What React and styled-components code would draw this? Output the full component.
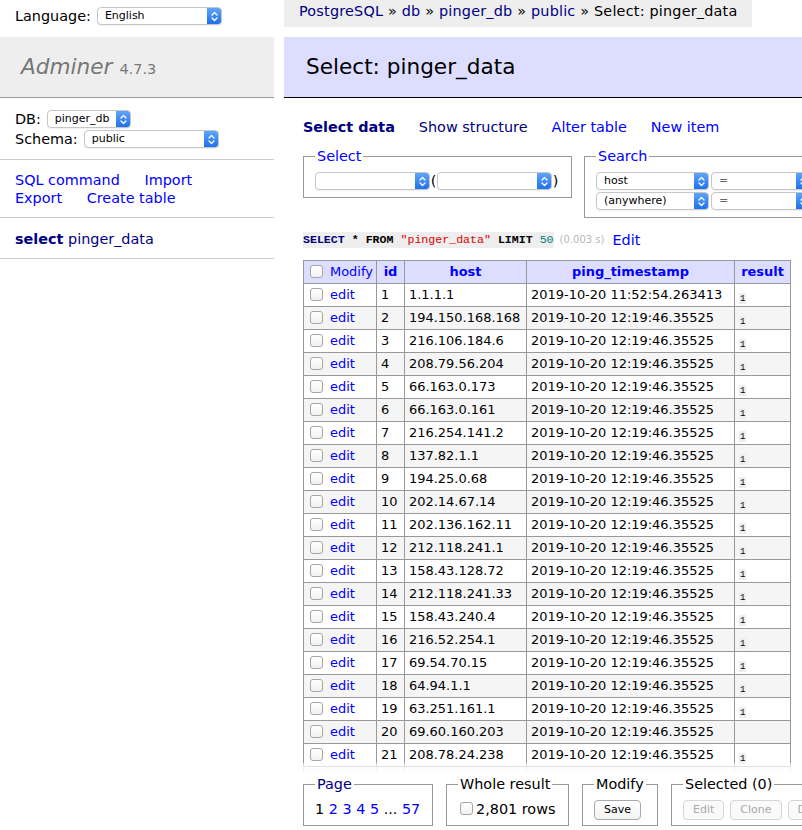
import React from "react";
import styled, { createGlobalStyle } from "styled-components";

const rows = [
  [1, "1.1.1.1", "2019-10-20 11:52:54.263413", "1"],
  [2, "194.150.168.168", "2019-10-20 12:19:46.35525", "1"],
  [3, "216.106.184.6", "2019-10-20 12:19:46.35525", "1"],
  [4, "208.79.56.204", "2019-10-20 12:19:46.35525", "1"],
  [5, "66.163.0.173", "2019-10-20 12:19:46.35525", "1"],
  [6, "66.163.0.161", "2019-10-20 12:19:46.35525", "1"],
  [7, "216.254.141.2", "2019-10-20 12:19:46.35525", "1"],
  [8, "137.82.1.1", "2019-10-20 12:19:46.35525", "1"],
  [9, "194.25.0.68", "2019-10-20 12:19:46.35525", "1"],
  [10, "202.14.67.14", "2019-10-20 12:19:46.35525", "1"],
  [11, "202.136.162.11", "2019-10-20 12:19:46.35525", "1"],
  [12, "212.118.241.1", "2019-10-20 12:19:46.35525", "1"],
  [13, "158.43.128.72", "2019-10-20 12:19:46.35525", "1"],
  [14, "212.118.241.33", "2019-10-20 12:19:46.35525", "1"],
  [15, "158.43.240.4", "2019-10-20 12:19:46.35525", "1"],
  [16, "216.52.254.1", "2019-10-20 12:19:46.35525", "1"],
  [17, "69.54.70.15", "2019-10-20 12:19:46.35525", "1"],
  [18, "64.94.1.1", "2019-10-20 12:19:46.35525", "1"],
  [19, "63.251.161.1", "2019-10-20 12:19:46.35525", "1"],
  [20, "69.60.160.203", "2019-10-20 12:19:46.35525", ""],
  [21, "208.78.24.238", "2019-10-20 12:19:46.35525", "1"],
  [22, "8.8.8.8", "2019-10-20 12:19:46.35525", "1"],
  [23, "8.8.4.4", "2019-10-20 12:19:46.35525", "1"],
];

const GlobalStyle = createGlobalStyle`
  html, body { margin: 0; padding: 0; background: #fff; }
  body {
    font: 14.4px/1.25 "DejaVu Sans", Verdana, sans-serif;
    color: #000;
    overflow: hidden;
  }
`;

const Page = styled.div`
  display: flex;
  width: 802px;
  height: 830px;
  overflow: hidden;
`;

const Side = styled.div`
  width: 274px;
  flex: none;
`;

const Main = styled.div`
  flex: none;
  width: 640px;
  margin-left: 10px;
  height: 830px;
  display: flex;
  flex-direction: column;
`;

const Link = styled.a`
  color: ${(p) => (p.$visited ? "#000080" : "#0000ff")};
  text-decoration: none;
  font-weight: ${(p) => (p.$bold ? "bold" : "normal")};
  cursor: pointer;
  white-space: nowrap;
`;

const LangBar = styled.div`
  display: flex;
  align-items: center;
  gap: 6px;
  height: 32px;
  padding: 0 15px;
  margin-bottom: 5px;
`;

const Logo = styled.h1`
  margin: 0;
  height: 60px;
  display: flex;
  align-items: center;
  padding: 0 21px;
  background: #eee;
  border-bottom: 1px solid #999;
  font-size: 21.6px;
  font-weight: normal;
  font-style: italic;
  color: #777;
`;

const Version = styled.span`
  font-style: normal;
  font-size: 14.5px;
  margin-left: 7px;
  margin-top: 4px;
`;

const MenuBlock = styled.div`
  padding: ${(p) => p.$pad || "11px 15px"};
  border-bottom: 1px solid #ccc;
  line-height: ${(p) => p.$lh || "18px"};
`;

const FieldRow = styled.div`
  display: flex;
  align-items: center;
  gap: 6px;
  height: 20px;
`;

const MenuLink = styled(Link)`
  margin-right: 20px;
`;

const SelectBox = styled.span`
  display: inline-flex;
  align-items: stretch;
  width: ${(p) => p.$w}px;
  height: 18px;
  box-sizing: border-box;
  border: 1px solid #c6c6c6;
  border-radius: 4px;
  background: #fff;
  font: 11px/16px "DejaVu Sans", sans-serif;
  color: ${(p) => (p.$muted ? "#666" : "#000")};
  overflow: hidden;
  vertical-align: middle;
  box-shadow: 0 1px 1px rgba(0, 0, 0, 0.06);
  flex: none;
`;

const SelectText = styled.span`
  flex: 1;
  padding-left: 7px;
  white-space: nowrap;
  overflow: hidden;
`;

const Stepper = styled.span`
  width: 15px;
  margin: -1px -1px -1px 0;
  border-radius: 0 4px 4px 0;
  background: linear-gradient(#63a8fb, #1b6ee9);
  display: flex;
  align-items: center;
  justify-content: center;
`;

function Select({ w, text, muted }) {
  return (
    <SelectBox $w={w} $muted={muted}>
      <SelectText>{text}</SelectText>
      <Stepper>
        <svg width="7" height="11" viewBox="0 0 7 11" fill="none" stroke="#fff" strokeWidth="1.3" strokeLinecap="round" strokeLinejoin="round">
          <path d="M1 4 L3.5 1.5 L6 4" />
          <path d="M1 7 L3.5 9.5 L6 7" />
        </svg>
      </Stepper>
    </SelectBox>
  );
}

const Breadcrumb = styled.div`
  align-self: flex-start;
  height: 27px;
  line-height: 23px;
  padding: 0 15px;
  background: #eee;
  white-space: nowrap;
  margin-bottom: 10px;
  letter-spacing: 0.2px;
  flex: none;
`;

const Heading = styled.h2`
  margin: 0;
  height: 61px;
  box-sizing: border-box;
  display: flex;
  align-items: center;
  padding-left: 22px;
  font-size: 21.6px;
  font-weight: normal;
  background: #ddf;
  border-bottom: 1px solid #000;
  flex: none;
`;

const Content = styled.div`
  flex: 1;
  min-height: 0;
  display: flex;
  flex-direction: column;
  padding-left: 19px;
`;

const Tabs = styled.div`
  display: flex;
  gap: 24px;
  margin-top: 20px;
  line-height: 18px;
  flex: none;
`;

const Fieldsets = styled.div`
  display: flex;
  gap: 12px;
  align-items: flex-start;
  margin-top: 11px;
  flex: none;
`;

const Fieldset = styled.fieldset`
  margin: 0;
  padding: 7px 11px;
  border: 1px solid #999;
  min-width: 0;
  box-sizing: border-box;
  width: ${(p) => (p.$w ? `${p.$w}px` : "auto")};
  line-height: 18px;
  flex: none;
`;

const Legend = styled.legend`
  padding: 0 2px;
  color: ${(p) => p.$color || "#000"};
`;

const InlineRow = styled.div`
  display: flex;
  align-items: center;
  gap: ${(p) => p.$gap || 0}px;
  height: 18px;
  margin-bottom: ${(p) => p.$mb || 0}px;
  white-space: nowrap;
`;

const Paren = styled.span`
  width: 7px;
  text-align: center;
`;

const SqlLine = styled.div`
  margin-top: 13px;
  line-height: 18px;
  display: flex;
  align-items: center;
  white-space: nowrap;
  flex: none;
`;

const Code = styled.code`
  background: #eee;
  font: 11.6px/14px "Liberation Mono", "Courier New", monospace;
  padding: 1px 0;
`;

const Tok = styled.span`
  color: ${(p) => p.$c || "#000"};
  font-weight: ${(p) => (p.$b ? "bold" : "normal")};
`;

const Time = styled.span`
  color: #b8b8b8;
  font-size: 10px;
  margin-left: 6px;
  margin-right: 8px;
`;

const TableWrap = styled.div`
  flex: 1;
  min-height: 0;
  overflow: hidden;
  margin-top: 11px;
`;

const Table = styled.table`
  border-collapse: collapse;
  table-layout: fixed;
  width: 487px;
  font-size: 12.96px;
`;

const Th = styled.th`
  width: ${(p) => p.$w}px;
  box-sizing: border-box;
  background: #ddf;
  border: 1px solid #999;
  padding: 0 4px;
  line-height: 22px;
  text-align: ${(p) => (p.$left ? "left" : "center")};
  font-weight: ${(p) => (p.$left ? "normal" : "bold")};
  white-space: nowrap;
`;

const Tr = styled.tr`
  background: ${(p) => (p.$odd ? "#f5f5f5" : "#fff")};
`;

const Td = styled.td`
  border: 1px solid #999;
  padding: 0 4px;
  line-height: 22px;
  white-space: nowrap;
  overflow: hidden;
`;

const Check = styled.span`
  display: inline-block;
  width: 13px;
  height: 13px;
  box-sizing: border-box;
  border: 1px solid #a6a6a6;
  border-radius: 3px;
  background: linear-gradient(#fff, #f1f1f1);
  vertical-align: middle;
  margin: -2px ${(p) => p.$gap ?? 7}px 0 2px;
`;

const Bit = styled.code`
  font: 9px/10px "Liberation Mono", monospace;
  background: #eee;
  padding: 1px 1px 0;
  vertical-align: -2px;
`;

const Footer = styled.div`
  flex: none;
  position: relative;
  background: #fff;
  padding: 3px 0 4px;
  display: flex;
  gap: 13px;
  align-items: flex-start;
  &::before {
    content: "";
    position: absolute;
    left: -19px;
    right: 0;
    bottom: 100%;
    height: 9px;
    background: linear-gradient(rgba(255, 255, 255, 0.55), #fff);
  }
`;

const Button = styled.span`
  display: inline-flex;
  align-items: center;
  justify-content: center;
  height: 20px;
  box-sizing: border-box;
  padding: 0 ${(p) => p.$px || 9}px;
  border: 1px solid ${(p) => (p.$disabled ? "#d6d6d6" : "#a9a9a9")};
  border-radius: 4px;
  background: ${(p) => (p.$disabled ? "#fafafa" : "linear-gradient(#fff, #f3f3f3)")};
  color: ${(p) => (p.$disabled ? "#a8a8a8" : "#000")};
  font: 11px "DejaVu Sans", sans-serif;
  margin-top: 1px;
`;

export default function App() {
  return (
    <Page>
      <GlobalStyle />
      <Side>
        <LangBar>
          Language: <Select w={125} text="English" />
        </LangBar>
        <Logo>
          Adminer<Version>4.7.3</Version>
        </Logo>
        <MenuBlock $pad="11px 15px 10px" $lh="20px">
          <FieldRow>
            DB: <Select w={84} text="pinger_db" />
          </FieldRow>
          <FieldRow>
            Schema: <Select w={135} text="public" />
          </FieldRow>
        </MenuBlock>
        <MenuBlock $pad="12px 15px 10px" $lh="17.5px">
          <MenuLink>SQL command</MenuLink> <MenuLink>Import</MenuLink>{" "}
          <MenuLink>Export</MenuLink> <MenuLink>Create table</MenuLink>
        </MenuBlock>
        <MenuBlock $pad="12px 15px 10px">
          <Link $visited $bold>select</Link> <Link $visited>pinger_data</Link>
        </MenuBlock>
      </Side>

      <Main>
        <Breadcrumb>
          <Link $visited>PostgreSQL</Link> » <Link $visited>db</Link> »{" "}
          <Link $visited>pinger_db</Link> » <Link $visited>public</Link> »
          Select: pinger_data
        </Breadcrumb>
        <Heading>Select: pinger_data</Heading>
        <Content>
          <Tabs>
            <Link $visited $bold>Select data</Link>
            <Link $visited>Show structure</Link>
            <Link>Alter table</Link>
            <Link>New item</Link>
          </Tabs>

          <Fieldsets>
            <Fieldset $w={269}>
              <Legend $color="#0000ff">Select</Legend>
              <InlineRow>
                <Select w={115} text="" />
                <Paren>(</Paren>
                <Select w={115} text="" />
                <Paren>)</Paren>
              </InlineRow>
            </Fieldset>
            <Fieldset>
              <Legend $color="#0000ff">Search</Legend>
              <InlineRow $gap={2} $mb={2}>
                <Select w={113} text="host" />
                <Select w={100} text="=" muted />
              </InlineRow>
              <InlineRow $gap={2}>
                <Select w={113} text="(anywhere)" />
                <Select w={100} text="=" muted />
              </InlineRow>
            </Fieldset>
          </Fieldsets>

          <SqlLine>
            <Code>
              <Tok $c="#000080" $b>SELECT</Tok> <Tok $b>*</Tok>{" "}
              <Tok $b>FROM</Tok> <Tok $c="#e00000">"pinger_data"</Tok>{" "}
              <Tok $b>LIMIT</Tok> <Tok $c="#008080">50</Tok>
            </Code>
            <Time>(0.003 s)</Time>
            <Link>Edit</Link>
          </SqlLine>

          <TableWrap>
            <Table>
              <thead>
                <tr>
                  <Th $w={73} $left>
                    <Check />
                    <Link>Modify</Link>
                  </Th>
                  <Th $w={28}><Link $bold>id</Link></Th>
                  <Th $w={122}><Link $bold>host</Link></Th>
                  <Th $w={208}><Link $bold>ping_timestamp</Link></Th>
                  <Th $w={56}><Link $bold>result</Link></Th>
                </tr>
              </thead>
              <tbody>
                {rows.map(([id, host, ts, res]) => (
                  <Tr key={id} $odd={id % 2 === 0}>
                    <Td>
                      <Check />
                      <Link>edit</Link>
                    </Td>
                    <Td>{id}</Td>
                    <Td>{host}</Td>
                    <Td>{ts}</Td>
                    <Td>{res && <Bit>{res}</Bit>}</Td>
                  </Tr>
                ))}
              </tbody>
            </Table>
          </TableWrap>

          <Footer>
            <Fieldset $w={130}>
              <Legend $color="#000080">Page</Legend>
              <InlineRow>
                1&nbsp;<Link>2</Link>&nbsp;<Link>3</Link>&nbsp;<Link>4</Link>
                &nbsp;<Link>5</Link>&nbsp;...&nbsp;<Link>57</Link>
              </InlineRow>
            </Fieldset>
            <Fieldset $w={123}>
              <Legend>Whole result</Legend>
              <InlineRow>
                <Check $gap={3} />
                2,801 rows
              </InlineRow>
            </Fieldset>
            <Fieldset $w={76}>
              <Legend>Modify</Legend>
              <InlineRow>
                <Button>Save</Button>
              </InlineRow>
            </Fieldset>
            <Fieldset>
              <Legend>Selected (0)</Legend>
              <InlineRow $gap={6}>
                <Button $disabled>Edit</Button>
                <Button $disabled>Clone</Button>
                <Button $disabled>Delete</Button>
              </InlineRow>
            </Fieldset>
          </Footer>
        </Content>
      </Main>
    </Page>
  );
}
